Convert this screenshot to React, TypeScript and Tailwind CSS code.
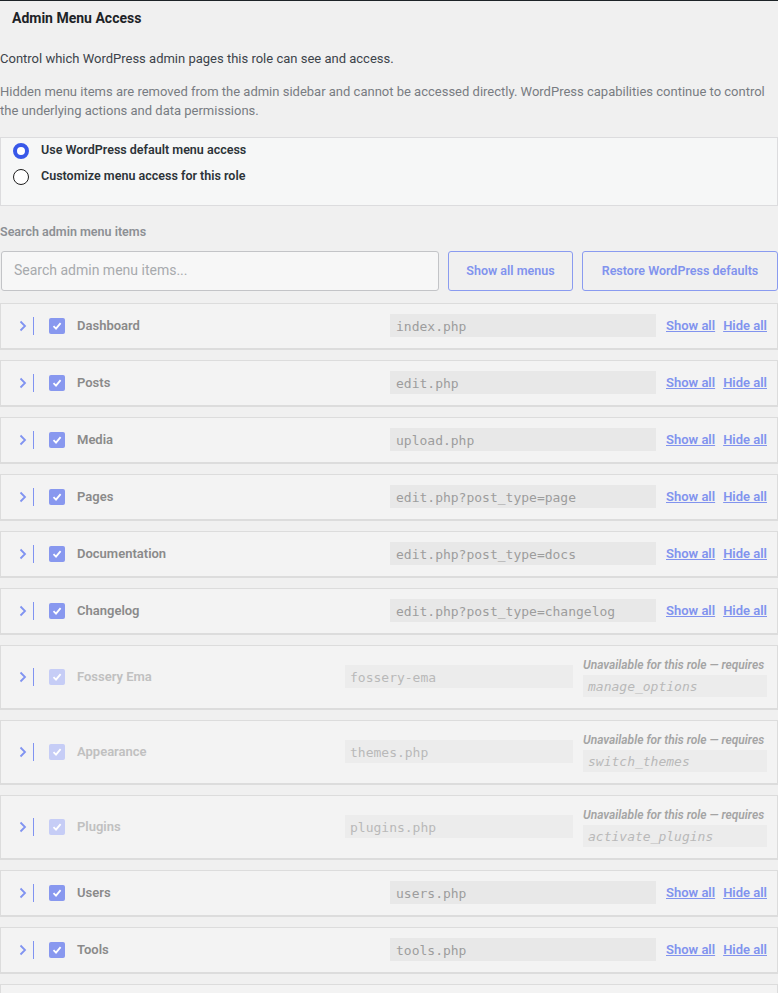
import React from 'react'

type MenuItem = {
  label: string
  slug: string
  requires?: string
}

const items: MenuItem[] = [
  { label: 'Dashboard', slug: 'index.php' },
  { label: 'Posts', slug: 'edit.php' },
  { label: 'Media', slug: 'upload.php' },
  { label: 'Pages', slug: 'edit.php?post_type=page' },
  { label: 'Documentation', slug: 'edit.php?post_type=docs' },
  { label: 'Changelog', slug: 'edit.php?post_type=changelog' },
  { label: 'Fossery Ema', slug: 'fossery-ema', requires: 'manage_options' },
  { label: 'Appearance', slug: 'themes.php', requires: 'switch_themes' },
  { label: 'Plugins', slug: 'plugins.php', requires: 'activate_plugins' },
  { label: 'Users', slug: 'users.php' },
  { label: 'Tools', slug: 'tools.php' },
  { label: 'Settings', slug: 'options-general.php' },
]

function Chevron() {
  return (
    <svg width="8" height="12" viewBox="0 0 8 12" className="shrink-0">
      <path d="M1.5 1.5 L6 6 L1.5 10.5" fill="none" stroke="#8093f1" strokeWidth="1.8" />
    </svg>
  )
}

function Check({ faded }: { faded?: boolean }) {
  return (
    <span
      className={
        'flex h-4 w-4 shrink-0 items-center justify-center rounded-[2px] ' +
        (faded ? 'bg-[#c6cdf6]' : 'bg-[#8898ef]')
      }
    >
      <svg width="12" height="12" viewBox="0 0 12 12">
        <path d="M2.5 6.2 L5 8.6 L9.6 3.2" fill="none" stroke="#ffffff" strokeWidth="1.8" />
      </svg>
    </span>
  )
}

function Row({ item }: { item: MenuItem }) {
  const locked = !!item.requires
  return (
    <div
      className={
        'flex items-center border border-b-2 border-[#dcdcdc] bg-[#f3f3f3] pl-[18px] pr-[10px] ' +
        (locked ? 'h-[65px]' : 'h-[47px]')
      }
    >
      <Chevron />
      <span className="ml-[6px] h-[18px] w-px bg-[#8093f1]" />
      <span className="ml-[15px]">
        <Check faded={locked} />
      </span>
      <span
        className={
          'ml-3 flex-1 text-[13px] font-semibold ' + (locked ? 'text-[#c0c0c0]' : 'text-[#8a8a8a]')
        }
      >
        {item.label}
      </span>
      {locked ? (
        <>
          <div className="flex h-[23px] w-[228px] items-center bg-[#ececec] px-[5px] pt-[2px] font-['DejaVu_Sans_Mono',monospace] text-[13px] text-[#b9b9b9]">
            {item.slug}
          </div>
          <div className="ml-[10px] flex w-[184px] flex-col gap-[2px]">
            <span className="text-[12px] font-semibold italic leading-[16px] text-[#a4a4a4]">
              Unavailable for this role — requires
            </span>
            <span className="flex h-[22px] items-center bg-[#ececec] px-[5px] pt-[2px] font-['DejaVu_Sans_Mono',monospace] text-[13px] italic text-[#b9b9b9]">
              {item.requires}
            </span>
          </div>
        </>
      ) : (
        <>
          <div className="flex h-[23px] w-[266px] items-center bg-[#e8e8e8] px-[6px] pt-[2px] font-['DejaVu_Sans_Mono',monospace] text-[13px] text-[#9d9d9d]">
            {item.slug}
          </div>
          <a className="ml-[10px] text-[13px] font-semibold text-[#8193ee] underline">Show all</a>
          <a className="ml-[8px] text-[13px] font-semibold text-[#8193ee] underline">Hide all</a>
        </>
      )}
    </div>
  )
}

export default function App() {
  return (
    <div className="min-h-[993px] border-t border-[#1d2327] bg-[#f0f0f0] font-['Roboto',sans-serif] text-[13px] text-[#3c434a]">
      <h2 className="px-3 pt-[7px] text-[14px] font-bold leading-5 text-[#1d2327]">Admin Menu Access</h2>

      <p className="mt-[21px] leading-[19.5px] text-[#3c434a]">
        Control which WordPress admin pages this role can see and access.
      </p>
      <p className="mt-[13px] leading-[19.5px] text-[#787c82]">
        Hidden menu items are removed from the admin sidebar and cannot be accessed directly. WordPress capabilities
        continue to control the underlying actions and data permissions.
      </p>

      <div className="mt-[16px] flex flex-col gap-[6px] border border-[#dcdcde] bg-[#f6f7f7] pb-[18px] pl-3 pt-[3px]">
        <label className="flex h-5 items-center gap-3">
          <span className="h-4 w-4 rounded-full border-[4px] border-[#3858e9] bg-white" />
          <span className="text-[12.5px] font-semibold text-[#2c3338]">Use WordPress default menu access</span>
        </label>
        <label className="flex h-5 items-center gap-3">
          <span className="h-4 w-4 rounded-full border border-[#1e1e1e] bg-white" />
          <span className="text-[12.5px] font-semibold text-[#2c3338]">Customize menu access for this role</span>
        </label>
      </div>

      <div className="mt-[18px] text-[12.5px] font-semibold leading-4 text-[#8c8f94]">Search admin menu items</div>

      <div className="mt-[11px] flex gap-[9px]">
        <div className="ml-px flex h-[40px] w-[438px] items-center rounded-[3px] border border-[#c3c4c7] bg-[#f7f7f7] px-3 text-[14px] text-[#a7aaad]">
          Search admin menu items...
        </div>
        <button className="h-[40px] w-[125px] rounded-[3px] border border-[#8a9bf0] pt-[2px] text-[12.5px] font-semibold text-[#8193ee]">
          Show all menus
        </button>
        <button className="h-[40px] w-[196px] rounded-[3px] border border-[#8a9bf0] pt-[2px] text-[12.5px] font-semibold text-[#8193ee]">
          Restore WordPress defaults
        </button>
      </div>

      <div className="mt-[12px] flex flex-col gap-[10px]">
        {items.map((item) => (
          <Row key={item.label} item={item} />
        ))}
      </div>
    </div>
  )
}
